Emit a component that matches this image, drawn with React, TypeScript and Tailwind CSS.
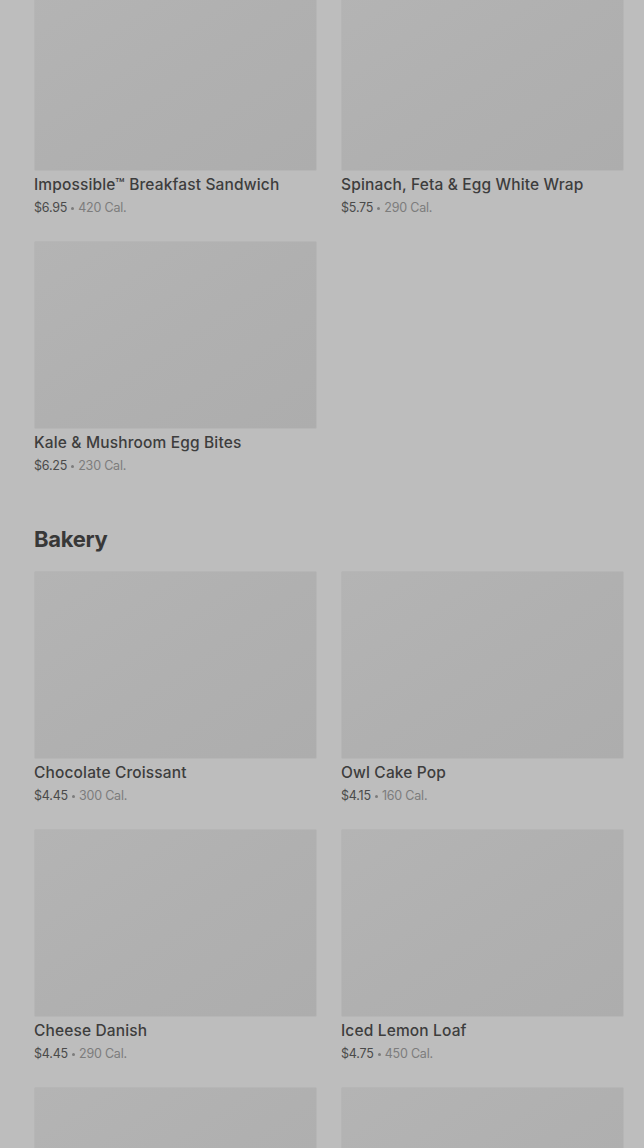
const firstRows = [
  { name: "Impossible™ Breakfast Sandwich", price: "$6.95", cal: "420 Cal." },
  { name: "Spinach, Feta & Egg White Wrap", price: "$5.75", cal: "290 Cal." },
  { name: "Kale & Mushroom Egg Bites", price: "$6.25", cal: "230 Cal." },
];

const bakery = [
  { name: "Chocolate Croissant", price: "$4.45", cal: "300 Cal." },
  { name: "Owl Cake Pop", price: "$4.15", cal: "160 Cal." },
  { name: "Cheese Danish", price: "$4.45", cal: "290 Cal." },
  { name: "Iced Lemon Loaf", price: "$4.75", cal: "450 Cal." },
  { name: "", price: "", cal: "" },
  { name: "", price: "", cal: "" },
];

type Item = { name: string; price: string; cal: string };

function Card({ item }: { item: Item }) {
  return (
    <div className="flex flex-col">
      <div className="h-[188px] rounded-[2px] border border-[#b6b6b6] bg-gradient-to-br from-[#b4b4b4] via-[#b0b0b0] to-[#adadad]" />
      {item.name && (
        <div className="pt-[4px]">
          <p className="text-[15.5px] leading-[20px] font-medium text-[#3d3d3d] tracking-[0.15px]">{item.name}</p>
          <p className="mt-[4px] flex items-center gap-[4px] text-[12.5px] leading-[18px] tracking-[-0.2px]">
            <span className="text-[#4a4a4a]">{item.price}</span>
            <span className="h-[3px] w-[3px] rounded-full bg-[#7c7c7c]" />
            <span className="text-[#7c7c7c]">{item.cal}</span>
          </p>
        </div>
      )}
    </div>
  );
}

export default function App() {
  return (
    <div
      className="h-[1148px] overflow-hidden bg-[#bdbdbd] pl-[34px] pr-[20px]"
      style={{ fontFamily: "Inter, 'Noto Sans', sans-serif" }}
    >
      <div className="-mt-[17px] grid grid-cols-2 gap-x-[24px] gap-y-[24px]">
        {firstRows.map((it, i) => (
          <Card key={i} item={it} />
        ))}
      </div>
      <h2 className="mt-[49px] text-[22px] leading-[30px] font-bold text-[#383838] tracking-[-0.3px]">Bakery</h2>
      <div className="mt-[17px] grid grid-cols-2 gap-x-[24px] gap-y-[24px]">
        {bakery.map((it, i) => (
          <Card key={i} item={it} />
        ))}
      </div>
    </div>
  );
}
